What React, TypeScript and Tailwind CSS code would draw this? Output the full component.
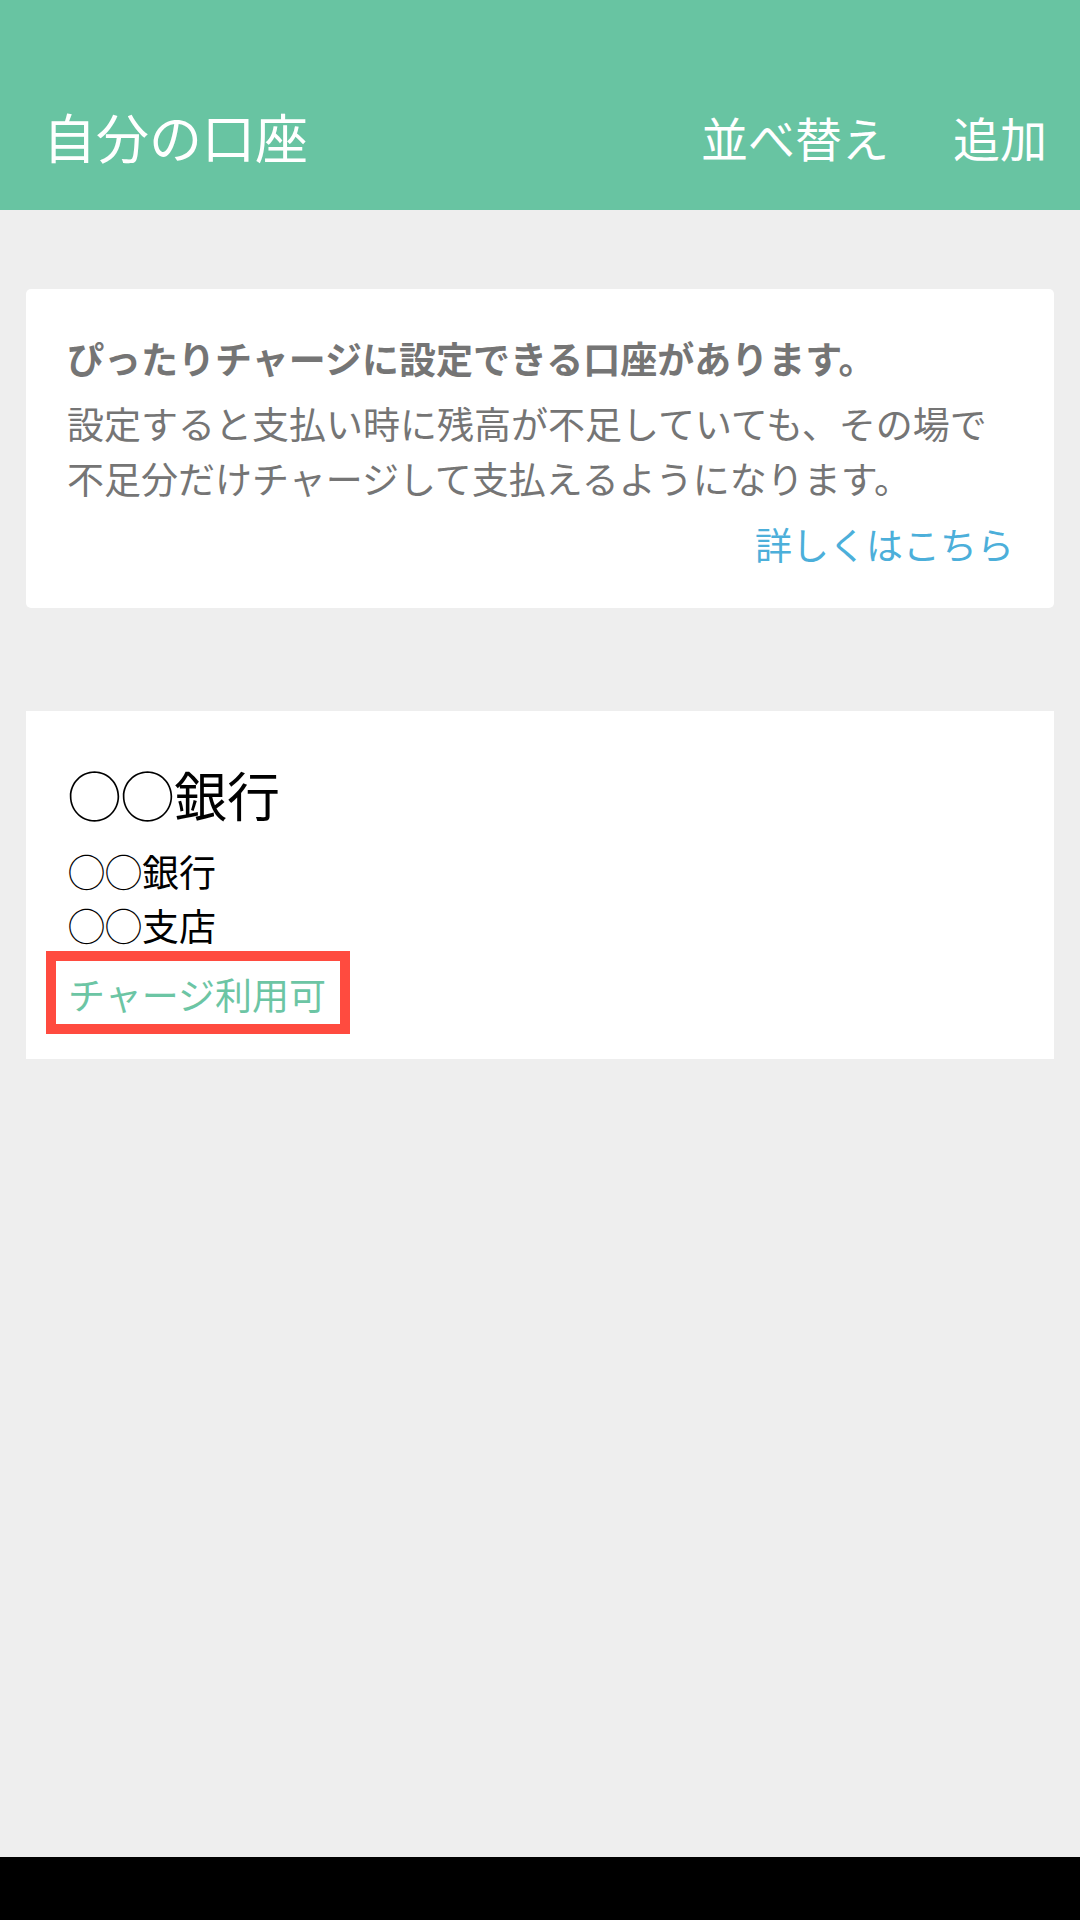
import React from 'react';

const FONT = { fontFamily: '"Noto Sans CJK JP", "Noto Sans", sans-serif' };

const App: React.FC = () => {
  return (
    <div className="w-[1080px] h-[1920px] flex flex-col bg-[#eeeeee]" style={FONT}>
      {/* Header */}
      <div className="h-[210px] shrink-0 bg-[#68c4a2] pt-[63px]">
        <div className="h-[147px] flex items-center pl-[43px] pr-[33px]">
          <h1 className="flex-1 text-[53px] leading-none text-white font-normal">自分の口座</h1>
          <div className="flex items-center gap-[64px] text-[47px] leading-none text-white">
            <button>並べ替え</button>
            <button>追加</button>
          </div>
        </div>
      </div>

      {/* Body */}
      <div className="flex-1 px-[26px] pt-[79px]">
        {/* Notice card */}
        <div className="bg-white rounded-[5px] pl-[41px] pr-[40px] pt-[42px] pb-[36px]">
          <p className="text-[37px] leading-[55px] font-bold text-[#757575] whitespace-nowrap">
            ぴったりチャージに設定できる口座があります。
          </p>
          <p className="mt-[10px] text-[37px] leading-[55px] text-[#757575] whitespace-nowrap">
            設定すると支払い時に残高が不足していても、その場で
            <br />
            不足分だけチャージして支払えるようになります。
          </p>
          <div className="mt-[11px] flex justify-end">
            <a className="text-[37px] leading-[55px] text-[#4cafda]">詳しくはこちら</a>
          </div>
        </div>

        {/* Account card */}
        <div className="mt-[103px] bg-white pl-[42px] pt-[48px] pb-[38px]">
          <p className="text-[53px] leading-[70px] text-black">◯◯銀行</p>
          <p className="mt-[15px] text-[37px] leading-[54px] text-black">◯◯銀行</p>
          <p className="text-[37px] leading-[54px] text-black">◯◯支店</p>
          <div className="mt-[15px]">
            <span className="relative inline-block text-[37px] leading-[54px] text-[#6cc5a4]">
              チャージ利用可
              <span className="absolute left-[-22px] right-[-24px] top-[-16px] bottom-[-13px] border-[10px] border-[#ff4b3f]" />
            </span>
          </div>
        </div>
      </div>

      {/* System nav bar */}
      <div className="h-[63px] shrink-0 bg-black" />
    </div>
  );
};

export default App;
